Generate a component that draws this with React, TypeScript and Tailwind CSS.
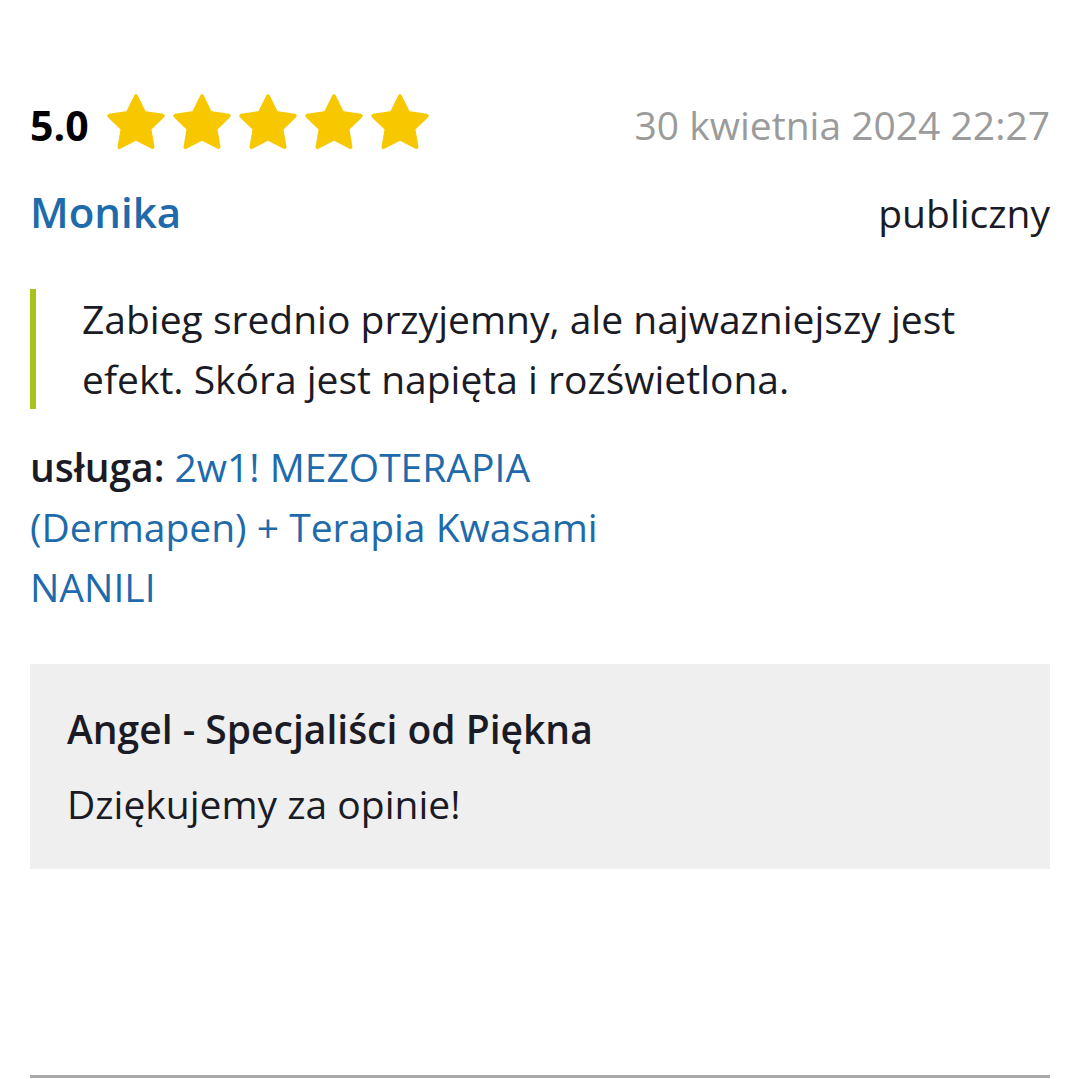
const STARS = [0, 1, 2, 3, 4];

function Star() {
  return (
    <svg width="64" height="64" viewBox="0 0 24 24" className="block shrink-0">
      <polygon
        points="12,2 15.09,8.26 22,9.27 17,14.14 18.18,21.02 12,17.77 5.82,21.02 7,14.14 2,9.27 8.91,8.26"
        fill="#f7c800"
        stroke="#f7c800"
        strokeWidth="1.5"
        strokeLinejoin="round"
      />
    </svg>
  );
}

export default function App() {
  return (
    <div
      className="min-h-[1079px] bg-white px-[30px] pt-[91px] text-[#1b1b26]"
      style={{ fontFamily: '"Open Sans", "Noto Sans", sans-serif' }}
    >
      <div className="flex h-[64px] items-center justify-between">
        <div className="flex items-center">
          <span className="mt-[4px] text-[41px] font-bold leading-none text-black">5.0</span>
          <div className="ml-[15px] flex items-center gap-[2px]">
            {STARS.map((i) => (
              <Star key={i} />
            ))}
          </div>
        </div>
        <span className="mt-[2px] text-[39px] leading-none text-[#9b9b9b]">
          30 kwietnia 2024 22:27
        </span>
      </div>

      <div className="mt-[29px] flex items-baseline justify-between">
        <span className="text-[42px] font-semibold leading-[56px] text-[#1e6aab]">Monika</span>
        <span className="text-[39px] leading-[56px]">publiczny</span>
      </div>

      <blockquote className="mt-[48px] mr-[60px] border-l-[6px] border-[#aac31c] pl-[46px] text-[39px] leading-[60px]">
        Zabieg srednio przyjemny, ale najwazniejszy jest efekt. Skóra jest napięta i rozświetlona.
      </blockquote>

      <p className="mt-[28px] max-w-[640px] text-[39px] leading-[60px]">
        <span className="font-semibold">usługa:</span>{" "}
        <a className="text-[#1e6aab]">2w1! MEZOTERAPIA (Dermapen) + Terapia Kwasami NANILI</a>
      </p>

      <div className="mt-[47px] bg-[#efefef] px-[37px] py-[35px]">
        <div className="text-[39px] font-semibold leading-[60px]">Angel - Specjaliści od Piękna</div>
        <div className="mt-[15px] text-[39px] leading-[60px]">Dziękujemy za opinie!</div>
      </div>

      <div className="mt-[206px] h-[3px] bg-[#a9a9a9]" />
    </div>
  );
}
